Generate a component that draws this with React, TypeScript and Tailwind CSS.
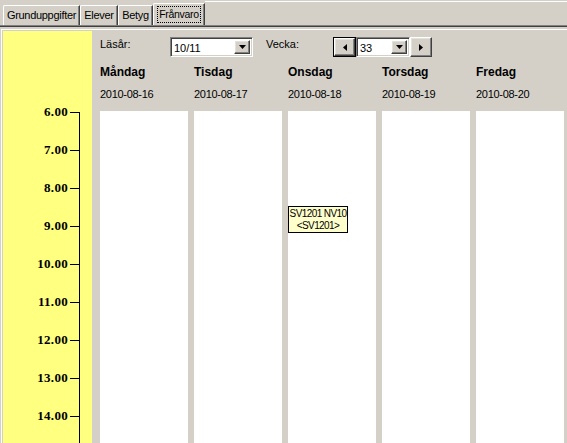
import React from 'react';

const days = [
  { name: 'Måndag', date: '2010-08-16' },
  { name: 'Tisdag', date: '2010-08-17' },
  { name: 'Onsdag', date: '2010-08-18' },
  { name: 'Torsdag', date: '2010-08-19' },
  { name: 'Fredag', date: '2010-08-20' },
];

const hours = [6, 7, 8, 9, 10, 11, 12, 13, 14];

const tabs = [
  { label: 'Grunduppgifter', w: 'w-[77px]' },
  { label: 'Elever', w: 'w-[38px]' },
  { label: 'Betyg', w: 'w-[35px]' },
];

// classic raised bevel
const raised =
  'border-t border-l border-t-white border-l-white border-r border-b border-r-[#404040] border-b-[#404040] shadow-[inset_-1px_-1px_#808080,inset_1px_1px_#e4e1db]';
// classic sunken field
const sunken =
  'border-t border-l border-t-[#808080] border-l-[#808080] border-r border-b border-r-white border-b-white shadow-[inset_1px_1px_#404040,inset_-1px_-1px_#d4d0c8]';

function DownArrow() {
  return (
    <svg width="7" height="4" viewBox="0 0 7 4">
      <path d="M0 0h7L3.5 4z" fill="#000" />
    </svg>
  );
}

function Combo({ value, width }: { value: string; width: string }) {
  return (
    <div className={`${sunken} ${width} h-[20px] bg-white flex items-stretch p-[2px]`}>
      <span className="flex-1 pl-[1px] leading-[16px] text-[11px] text-black">{value}</span>
      <div className={`${raised} bg-[#d4d0c8] w-[16px] flex items-center justify-center`}>
        <DownArrow />
      </div>
    </div>
  );
}

export default function App() {
  return (
    <div
      className="w-[567px] h-[443px] bg-[#d4d0c8] flex flex-col overflow-hidden text-black select-none"
      style={{ fontFamily: '"Liberation Sans", Arial, sans-serif' }}
    >
      {/* Tab strip */}
      <div className="h-[29px] flex flex-col shrink-0">
        <div className="flex items-end h-[25px] pl-[3px]">
          {tabs.map((t) => (
            <div
              key={t.label}
              className={`${t.w} h-[20px] border-t border-l border-t-white border-l-white border-r border-r-[#404040] shadow-[inset_-1px_0_#808080] rounded-tl-[2px] flex items-center justify-center text-[11px] leading-none tracking-[-0.3px] whitespace-nowrap`}
            >
              {t.label}
            </div>
          ))}
          <div className="w-[52px] h-[22px] border-t border-l border-t-white border-l-white border-r border-r-[#404040] shadow-[inset_-1px_0_#808080] rounded-tl-[2px] flex items-center justify-center text-[10.5px] leading-none tracking-[-0.3px] whitespace-nowrap">
            <span className="border border-dotted border-black px-[1px] py-[2px]">Frånvaro</span>
          </div>
          <div className="flex-1 self-start mt-[1px] h-px bg-white" />
        </div>
        <div className="h-px bg-[#808080]" />
        <div className="h-px bg-[#404040]" />
      </div>

      {/* Body */}
      <div className="flex flex-1 ml-[1px] border-t border-l border-white pt-[1px] pl-[1px] min-h-0">
        {/* Time axis */}
        <div className="relative w-[89px] bg-[#ffff80] shrink-0 pt-[62px] overflow-hidden">
          {hours.map((h) => (
            <div key={h} className="h-[38px] flex items-center justify-end pr-[13px]">
              <span
                className="text-[13px] font-bold mr-[2px] tracking-[0.3px]"
                style={{ fontFamily: '"Liberation Serif", "Times New Roman", serif' }}
              >
                {h}.00
              </span>
              <span className="w-[9px] h-px bg-black" />
            </div>
          ))}
          <div className="absolute left-[76px] top-[81px] bottom-0 w-px bg-black" />
        </div>

        {/* Schedule */}
        <div className="flex-1 flex flex-col pl-[8px] pt-[6px] min-w-0">
          <div className="flex items-start h-[20px] text-[11px]">
            <span className="w-[70px] leading-[13px] pt-[1px]">Läsår:</span>
            <Combo value="10/11" width="w-[83px]" />
            <span className="ml-[13px] w-[67px] leading-[13px] pt-[1px]">Vecka:</span>
            <div className="w-[23px] h-[20px] border border-black">
              <div className={`${raised} h-full flex items-center justify-center`}>
                <svg width="4" height="7" viewBox="0 0 4 7">
                  <path d="M4 0v7L0 3.5z" fill="#000" />
                </svg>
              </div>
            </div>
            <Combo value="33" width="w-[54px]" />
            <div className={`${raised} w-[22px] h-[20px] flex items-center justify-center`}>
              <svg width="4" height="7" viewBox="0 0 4 7">
                <path d="M0 0v7L4 3.5z" fill="#000" />
              </svg>
            </div>
          </div>

          <div className="flex gap-[6px] flex-1 mt-[8px] min-h-0">
            {days.map((d, i) => (
              <div key={d.name} className="w-[88px] flex flex-col">
                <div className="text-[12px] font-bold leading-[14px] h-[14px]">{d.name}</div>
                <div className="text-[11px] leading-[13px] mt-[9px] tracking-[-0.3px]">{d.date}</div>
                <div className="relative flex-1 bg-white mt-[10px]">
                  {i === 2 && (
                    <div className="absolute left-0 top-[95px] w-[60px] h-[27px] bg-[#ffffcc] border border-black flex flex-col items-center justify-center text-[10px] leading-[12px] whitespace-nowrap tracking-[-0.6px]">
                      <span>SV1201 NV10</span>
                      <span>&lt;SV1201&gt;</span>
                    </div>
                  )}
                </div>
              </div>
            ))}
          </div>
        </div>
      </div>
    </div>
  );
}
